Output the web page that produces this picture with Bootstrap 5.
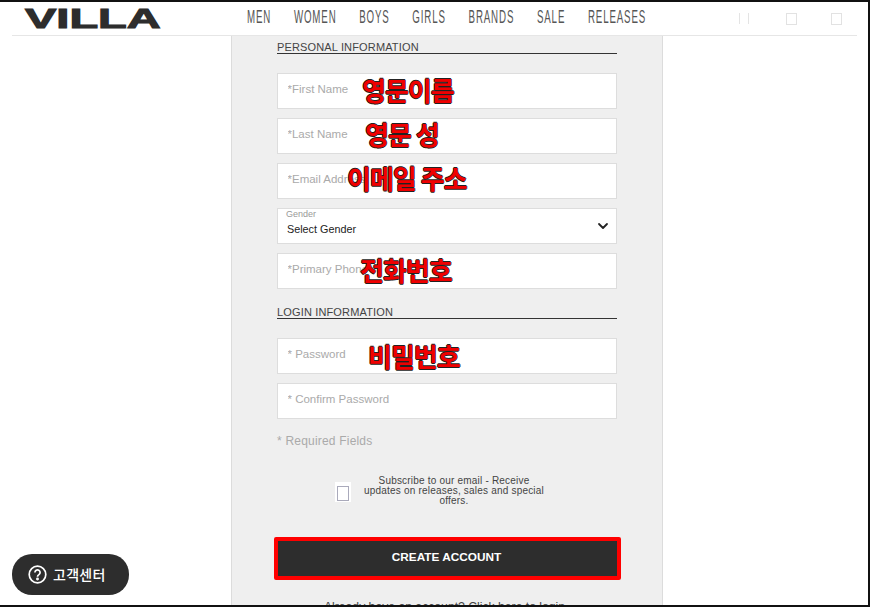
<!DOCTYPE html>
<html lang="en">
<head>
    <meta charset="UTF-8">
    <meta name="viewport" content="width=device-width, initial-scale=1.0">
    <title>VILLA - create account</title>
    <link href="https://cdn.jsdelivr.net/npm/bootstrap@5.3.0/dist/css/bootstrap.min.css" rel="stylesheet">
    <style>
        html, body { height: 100%; overflow: hidden; }
        body { font-family: "Liberation Sans", Arial, sans-serif; background: #fff; }
        .screen-frame {
            height: 607px;
            overflow: hidden;
            position: relative;
            border-top: 2px solid #111;
            border-right: 2px solid #111;
            border-bottom: 2px solid #111;
        }
        .top-bar {
            height: 34px;
            margin: 0 11px 0 12px;
            border-bottom: 1px solid #e6e6e6;
        }
        .brand-text {
            flex: none;
            width: 137px;
            margin-left: 13px;
            font-weight: 700;
            font-size: 27px;
            line-height: 30px;
            color: #2d2d2d;
            -webkit-text-stroke: 1px #2d2d2d;
            transform: scaleX(1.74);
            transform-origin: left center;
            white-space: nowrap;
        }
        .main-menu {
            flex: none;
            width: 400px;
            margin-left: 85px;
            margin-bottom: 3px;
            gap: 42px;
            font-size: 18px;
            line-height: 22px;
            letter-spacing: 1.6px;
            color: #555;
            transform: scaleX(.54);
            transform-origin: left center;
            white-space: nowrap;
        }
        .tool-icons { flex: none; margin-left: auto; margin-right: 15px; gap: 34px; }
        .tool-bars { width: 10px; height: 11px; border-left: 1px solid #e4e4e4; border-right: 1px solid #e4e4e4; margin-right: 3px; }
        .tool-box { width: 11px; height: 12px; border: 1px solid #e2e2e2; margin-top: 1px; }
        .form-panel {
            width: 432px;
            height: 571px;
            margin-left: 231px;
            padding: 0 45px;
            background: #efefef;
            border-left: 1px solid #dcdcdc;
            border-right: 1px solid #dcdcdc;
        }
        .section-title {
            font-size: 11px;
            line-height: 12px;
            letter-spacing: .15px;
            color: #444;
            border-bottom: 1px solid #333;
            padding-top: 5px;
            margin-bottom: 19px;
        }
        .login-title { padding-top: 8px; }
        .field-box { position: relative; margin-bottom: 9px; width: 340px; }
        .field-box .form-control, .field-box .form-select {
            height: 36px;
            border: 1px solid #ddd;
            border-radius: 0;
            font-size: 11.5px;
            padding: 0 9.5px 4px;
            color: #222;
            box-shadow: none;
        }
        .field-box .form-control::placeholder { color: #aaa; opacity: 1; }
        .field-box .form-select {
            padding: 6px 9px 0;
            font-size: 10.8px;
            line-height: 20px;
            background-image: url("data:image/svg+xml,%3csvg xmlns='http://www.w3.org/2000/svg' viewBox='0 0 12 12'%3e%3cpath fill='none' stroke='%23222' stroke-width='1.800' stroke-linecap='round' stroke-linejoin='round' d='M2 4l4 4 4-4'/%3e%3c/svg%3e");
            background-size: 12px 12px;
            background-position: right 7px center;
        }
        .gender-label {
            position: absolute;
            top: 1px;
            left: 9px;
            font-size: 9px;
            line-height: 11px;
            color: #999;
            z-index: 1;
        }
        .red-note {
            position: absolute;
            font-family: "Noto Sans CJK KR", sans-serif;
            font-weight: 700;
            font-size: 26px;
            line-height: 34px;
            color: #f00000;
            text-shadow: .7px 0 0 #222, -.7px 0 0 #222, 0 .7px 0 #222, 0 -.7px 0 #222;
            white-space: nowrap;
            letter-spacing: -1px;
        }
        .note-first { left: 85px; top: 0; }
        .note-last { left: 88px; top: -1px; }
        .note-email { left: 70px; top: -2px; }
        .note-phone { left: 83px; top: 0; }
        .note-pass { left: 91px; top: 1px; }
        .req-note { font-size: 12px; line-height: 14px; color: #aaa; margin-top: 15px; letter-spacing: .2px; }
        .sub-row { margin-top: 28px; margin-left: 58px; width: 220px; gap: 10px; }
        .check-wrap { width: 16px; height: 20px; background: #fff; padding: 4px 2px 1px; margin-top: 2px; flex: none; }
        .check-wrap span { display: block; height: 100%; border: 1px solid #aab; }
        .sub-text { width: 188px; font-size: 10px; line-height: 10px; letter-spacing: .2px; text-align: center; color: #444; margin-left: -1px; }
        .create-btn {
            display: block;
            width: 347px;
            height: 43px;
            margin: 31px 0 0 -3px;
            background: #2d2d2d;
            border: 4px solid #f00;
            border-radius: 2px;
            color: #fff;
            font-weight: 700;
            font-size: 11.8px;
            padding: 0 2px 2px 0;
        }
        .login-line { font-size: 12.2px; line-height: 14px; text-align: center; color: #444; margin: 20px 0 0 -5px; white-space: nowrap; }
        .help-pill {
            position: absolute;
            left: 12px;
            top: 552px;
            width: 117px;
            height: 41px;
            border-radius: 20px;
            background: #2d2d2d;
            color: #fff;
            font-family: "Noto Sans CJK KR", sans-serif;
            font-weight: 500;
            font-size: 14px;
            letter-spacing: .3px;
            gap: 6px;
            padding-left: 16px;
        }
    </style>
</head>
<body>
    <div class="screen-frame">
        <div class="top-bar d-flex align-items-center">
            <div class="brand-text">VILLA</div>
            <div class="main-menu d-flex">
                <span>MEN</span><span>WOMEN</span><span>BOYS</span><span>GIRLS</span><span>BRANDS</span><span>SALE</span><span>RELEASES</span>
            </div>
            <div class="tool-icons d-flex align-items-center">
                <span class="tool-bars"></span><span class="tool-box"></span><span class="tool-box"></span>
            </div>
        </div>

        <div class="form-panel">
            <div class="section-title">PERSONAL INFORMATION</div>
            <div class="field-box"><input class="form-control" placeholder="*First Name"><span class="red-note note-first">영문이름</span></div>
            <div class="field-box"><input class="form-control" placeholder="*Last Name"><span class="red-note note-last">영문 성</span></div>
            <div class="field-box"><input class="form-control" placeholder="*Email Address"><span class="red-note note-email">이메일 주소</span></div>
            <div class="field-box">
                <span class="gender-label">Gender</span>
                <select class="form-select"><option>Select Gender</option></select>
            </div>
            <div class="field-box"><input class="form-control" placeholder="*Primary Phone"><span class="red-note note-phone">전화번호</span></div>

            <div class="section-title login-title">LOGIN INFORMATION</div>
            <div class="field-box"><input class="form-control" placeholder="* Password"><span class="red-note note-pass">비밀번호</span></div>
            <div class="field-box"><input class="form-control" placeholder="* Confirm Password"></div>

            <div class="req-note">* Required Fields</div>

            <div class="sub-row d-flex align-items-center">
                <div class="check-wrap"><span></span></div>
                <div class="sub-text">Subscribe to our email - Receive updates on releases, sales and special offers.</div>
            </div>

            <button class="create-btn" type="button">CREATE ACCOUNT</button>
            <div class="login-line">Already have an account? Click here to login</div>
        </div>

        <div class="help-pill d-flex align-items-center">
            <svg width="19" height="19" viewBox="0 0 19 19" fill="none" stroke="#fff" stroke-width="1.7">
                <circle cx="9.500" cy="9.500" r="8.300"/>
                <path d="M6.900 7.400a2.600 2.600 0 1 1 4 2.200c-.9.6-1.400 1-1.400 2.100"/>
                <circle cx="9.500" cy="14" r=".6" fill="#fff"/>
            </svg>
            <span>고객센터</span>
        </div>
    </div>
    <script src="https://cdn.jsdelivr.net/npm/bootstrap@5.3.0/dist/js/bootstrap.bundle.min.js"></script>
</body>
</html>
